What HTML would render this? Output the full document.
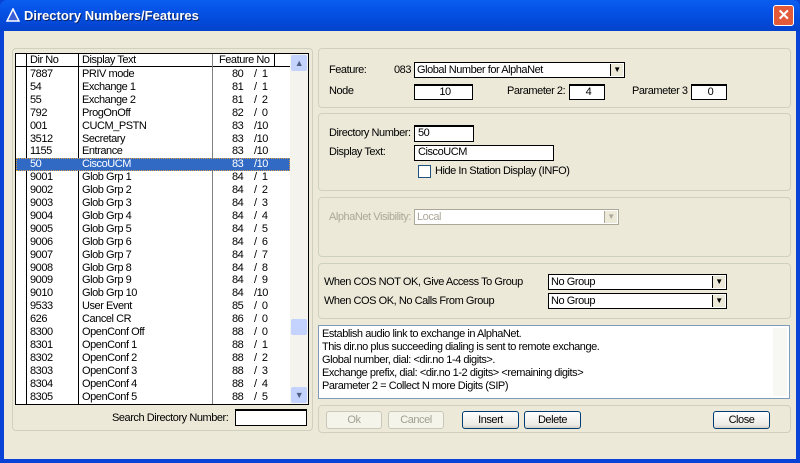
<!DOCTYPE html>
<html><head><style>
*{box-sizing:border-box;margin:0;padding:0}
body{width:800px;height:463px;overflow:hidden;background:#0842d6;font-family:"Liberation Sans",sans-serif;font-size:11px;letter-spacing:-0.45px;color:#000;position:relative}
.title{position:absolute;left:0;top:0;width:800px;height:31px;background:linear-gradient(#0a5ef0,#0551e4 40%,#0342cc);border-radius:7px 7px 0 0}
.title span{position:absolute;left:24px;top:8px;color:#fff;font-weight:bold;font-size:13px;letter-spacing:0;text-shadow:1px 1px #0a246a}
.xbtn{position:absolute;right:6px;top:5px;width:21px;height:21px;background:#e35a38;border:1px solid #fff;border-radius:3px;color:#fff;font-weight:bold;font-size:15px;text-align:center;line-height:19px}
.client{position:absolute;left:4px;top:31px;width:792px;height:428px;background:#ece9d8}
.a{position:absolute}
.grp{position:absolute;border:1px solid #d0d0bf;border-radius:4px}
.box{position:absolute;background:#fff;border:1px solid #7f9db9}
.inp{position:absolute;background:#fff;border:1px solid #000;border-top:2px solid #000;padding-left:3px;line-height:13px}
.dd{position:absolute;background:#fff;border:1px solid #000;padding-left:2px;line-height:14px}
.dd i{position:absolute;right:1px;top:1px;width:13px;height:12px;background:#ece9d8;border-left:1px solid #000;font-style:normal;font-size:8px;text-align:center;line-height:12px}
.btn{position:absolute;height:18px;border:1px solid #003c74;border-radius:3px;background:linear-gradient(#fff,#ecebe6 80%,#d6d0c5);text-align:center;line-height:16px}
.btn.d{border-color:#c9c7ba;color:#a19f93;background:#f5f4ea}
.row{position:absolute;left:0;height:12.9px;line-height:12.9px;width:274px}
.row span{position:absolute}
</style></head><body>
<div class="title"><span>Directory Numbers/Features</span>
<svg class="a" style="left:6px;top:8px" width="14" height="14"><path d="M7 1L13 13H1Z" fill="#3a5fd8" stroke="#fff" stroke-width="1.5"/></svg>
<div class="xbtn">✕</div></div>
<div class="client">
<div class="grp" style="left:8px;top:17px;width:301px;height:383px"></div>
<div class="box" style="left:11px;top:22px;width:294px;height:352px;border-color:#000;overflow:hidden">
 <div class="a" style="left:0;top:0;width:290px;height:13px;border-bottom:1px solid #000"></div>
 <div class="a" style="left:10px;top:0;width:1px;height:350px;background:#000"></div>
 <div class="a" style="left:62px;top:0;width:1px;height:350px;background:#000"></div>
 <div class="a" style="left:196px;top:0;width:1px;height:350px;background:#808080"></div>
 <div class="a" style="left:258px;top:0;width:1px;height:13px;background:#000"></div>
 <div class="a" style="left:14px;top:0;line-height:13px">Dir No</div>
 <div class="a" style="left:66px;top:0;line-height:13px">Display Text</div>
 <div class="a" style="left:203px;top:0;line-height:13px">Feature No</div>
 <div class="a" style="left:274px;top:0;width:18px;height:350px;background:#f4f3ee"></div>
 <div class="a" style="left:275px;top:1px;width:16px;height:16px;background:#c3d3fd;border-radius:2px;color:#4d6185;text-align:center;font-size:9px;line-height:16px">▲</div>
 <div class="a" style="left:275px;top:265px;width:16px;height:16px;background:#c3d3fd;border-radius:2px"></div>
 <div class="a" style="left:275px;top:333px;width:16px;height:16px;background:#c3d3fd;border-radius:2px;color:#4d6185;text-align:center;font-size:9px;line-height:16px">▼</div>
 <div id="rows" class="a" style="left:0;top:14px;width:274px"></div>
</div>
<div class="a" style="left:108px;top:381px">Search Directory Number:</div>
<div class="inp" style="left:231px;top:378px;width:72px;height:17px"></div>

<div class="grp" style="left:314px;top:17px;width:473px;height:60px"></div>
<div class="a" style="left:325px;top:33px">Feature:</div>
<div class="a" style="left:390px;top:33px">083</div>
<div class="dd" style="left:410px;top:31px;width:211px;height:16px">Global Number for AlphaNet<i>▼</i></div>
<div class="a" style="left:325px;top:54px">Node</div>
<div class="inp" style="left:410px;top:53px;width:59px;height:16px;text-align:center">10</div>
<div class="a" style="left:503px;top:54px">Parameter 2:</div>
<div class="inp" style="left:565px;top:53px;width:36px;height:16px;text-align:center">4</div>
<div class="a" style="left:628px;top:54px">Parameter 3</div>
<div class="inp" style="left:687px;top:53px;width:36px;height:16px;text-align:center">0</div>

<div class="grp" style="left:314px;top:82px;width:473px;height:78px"></div>
<div class="a" style="left:325px;top:96px">Directory Number:</div>
<div class="inp" style="left:410px;top:94px;width:60px;height:17px">50</div>
<div class="a" style="left:325px;top:115px">Display Text:</div>
<div class="inp" style="left:410px;top:114px;width:140px;height:16px;border-width:1px">CiscoUCM</div>
<div class="a" style="left:414px;top:134px;width:13px;height:13px;border:1px solid #1c5180;background:#fff"></div>
<div class="a" style="left:431px;top:134px">Hide In Station Display (INFO)</div>

<div class="grp" style="left:314px;top:166px;width:473px;height:60px"></div>
<div class="a" style="left:325px;top:180px;color:#aca899">AlphaNet Visibility:</div>
<div class="dd" style="left:410px;top:178px;width:205px;height:16px;border-color:#aca899;color:#aca899">Local<i style="border-color:#aca899;color:#aca899">▼</i></div>

<div class="grp" style="left:314px;top:232px;width:473px;height:56px"></div>
<div class="a" style="left:320px;top:245px">When COS NOT OK, Give Access To Group</div>
<div class="dd" style="left:544px;top:243px;width:179px;height:16px">No Group<i>▼</i></div>
<div class="a" style="left:320px;top:264px">When COS OK, No Calls From Group</div>
<div class="dd" style="left:544px;top:262px;width:179px;height:16px">No Group<i>▼</i></div>

<div class="box" style="left:314px;top:294px;width:472px;height:74px;padding:2px 3px;line-height:13px">Establish audio link to exchange in AlphaNet.<br>This dir.no plus succeeding dialing is sent to remote exchange.<br>Global number, dial: &lt;dir.no 1-4 digits&gt;.<br>Exchange prefix, dial: &lt;dir.no 1-2 digits&gt; &lt;remaining digits&gt;<br>Parameter 2 = Collect N more Digits (SIP)
<div class="a" style="right:2px;top:2px;width:14px;height:68px;background:#f7f7f3"></div></div>

<div class="grp" style="left:314px;top:374px;width:473px;height:28px"></div>
<div class="btn d" style="left:322px;top:380px;width:56px">Ok</div>
<div class="btn d" style="left:384px;top:380px;width:56px">Cancel</div>
<div class="btn" style="left:458px;top:380px;width:57px">Insert</div>
<div class="btn" style="left:520px;top:380px;width:57px">Delete</div>
<div class="btn" style="left:709px;top:380px;width:57px">Close</div>
</div>
<script>
var d=[["7887","PRIV mode",80,1],["54","Exchange 1",81,1],["55","Exchange 2",81,2],["792","ProgOnOff",82,0],["001","CUCM_PSTN",83,10],["3512","Secretary",83,10],["1155","Entrance",83,10],["50","CiscoUCM",83,10],["9001","Glob Grp 1",84,1],["9002","Glob Grp 2",84,2],["9003","Glob Grp 3",84,3],["9004","Glob Grp 4",84,4],["9005","Glob Grp 5",84,5],["9006","Glob Grp 6",84,6],["9007","Glob Grp 7",84,7],["9008","Glob Grp 8",84,8],["9009","Glob Grp 9",84,9],["9010","Glob Grp 10",84,10],["9533","User Event",85,0],["626","Cancel CR",86,0],["8300","OpenConf Off",88,0],["8301","OpenConf 1",88,1],["8302","OpenConf 2",88,2],["8303","OpenConf 3",88,3],["8304","OpenConf 4",88,4],["8305","OpenConf 5",88,5]];
var h="";d.forEach(function(r,i){var s=i==7;h+='<div class="row" style="top:'+(i*12.9)+'px;'+(s?'background:#316ac5;color:#fff;outline:1px dotted #e0a040;outline-offset:-1px;':'')+'"><span style="left:14px">'+r[0]+'</span><span style="left:66px">'+r[1]+'</span><span style="left:216px">'+r[2]+'</span><span style="left:238px">/'+(r[3]<10?'&nbsp;&nbsp;':'')+r[3]+'</span></div>';});
document.getElementById("rows").innerHTML=h;
</script>
</body></html>
